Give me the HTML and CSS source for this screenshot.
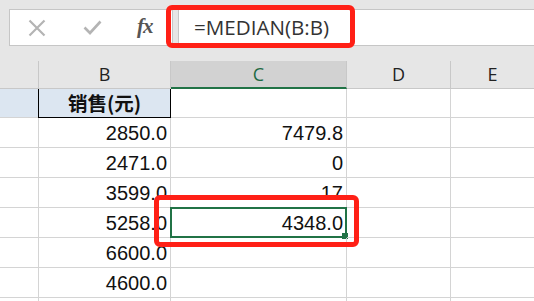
FILE: index.html
```html
<!DOCTYPE html>
<html>
<head>
<meta charset="utf-8">
<link rel="stylesheet" href="styles.css">
</head>
<body>
<div class="page">
  <div class="toolbar">
    <div class="fbox">
      <span class="ico"><svg width="18" height="18" viewBox="0 0 18 18"><path d="M1.5 1.5 L16.5 16.5 M16.5 1.5 L1.5 16.5" stroke="#b4b4b4" stroke-width="2.2" fill="none"/></svg></span>
      <span class="ico"><svg width="19" height="15" viewBox="0 0 19 15"><path d="M1.5 7.5 L7 13 L17.5 1.5" stroke="#b4b4b4" stroke-width="2.6" fill="none"/></svg></span>
      <span class="fx">fx</span>
    </div>
    <div class="finput">=MEDIAN(B:B)</div>
  </div>
  <div class="grid">
    <div class="hd">&nbsp;</div>
    <div class="hd">B</div>
    <div class="hd sel">C</div>
    <div class="hd">D</div>
    <div class="hd last">E</div>

    <div class="c blue"></div>
    <div class="c blue title">销售(元)</div>
    <div class="c"></div>
    <div class="c"></div>
    <div class="c last"></div>

    <div class="c"></div><div class="c num">2850.0</div><div class="c num">7479.8</div><div class="c"></div><div class="c last"></div>
    <div class="c"></div><div class="c num">2471.0</div><div class="c num">0</div><div class="c"></div><div class="c last"></div>
    <div class="c"></div><div class="c num">3599.0</div><div class="c num">17</div><div class="c"></div><div class="c last"></div>
    <div class="c"></div><div class="c num">5258.0</div><div class="c num active">4348.0<span class="handle"></span></div><div class="c"></div><div class="c last"></div>
    <div class="c"></div><div class="c num">6600.0</div><div class="c num"></div><div class="c"></div><div class="c last"></div>
    <div class="c"></div><div class="c num">4600.0</div><div class="c num"></div><div class="c"></div><div class="c last"></div>
    <div class="c"></div><div class="c num"></div><div class="c num"></div><div class="c"></div><div class="c last"></div>
  </div>
  <div class="mark mark-formula"></div>
  <div class="mark mark-cell"></div>
</div>
</body>
</html>
```

FILE: styles.css
```css
* { box-sizing: border-box; }
html, body { margin: 0; padding: 0; }
body {
  width: 534px;
  height: 301px;
  overflow: hidden;
  background: #ffffff;
  font-family: "Liberation Sans", Arial, "Noto Sans CJK SC", sans-serif;
}
.page { position: relative; width: 534px; height: 301px; overflow: hidden; }

.toolbar {
  background: #e6e6e6;
  height: 61px;
  padding: 9px 0 0 9px;
  display: flex;
  align-items: flex-start;
}
.fbox {
  width: 164px;
  height: 37px;
  background: #fff;
  border: 1px solid #c6c6c6;
  display: flex;
  align-items: center;
  padding-left: 18px;
}
.ico { display: flex; align-items: center; }
.ico:first-child { width: 55px; }
.ico:nth-child(2) { width: 54px; }
.fx {
  font-family: "Liberation Serif", "DejaVu Serif", serif;
  font-style: italic;
  font-weight: bold;
  font-size: 21px;
  color: #555;
  letter-spacing: -1px;
  margin-top: -3px;
}
.finput {
  margin-left: 5px;
  flex: 1;
  height: 37px;
  background: #fff;
  border: 1px solid #c6c6c6;
  border-right: none;
  font-family: "Open Sans", "Liberation Sans", sans-serif;
  font-size: 20.6px;
  color: #333;
  padding-left: 15px;
  line-height: 34px;
}

.grid {
  display: grid;
  grid-template-columns: 39px 132px 176px 104px 83px;
  grid-auto-rows: 30px;
  grid-template-rows: 28px 29px;
}
.hd {
  background: #e6e6e6;
  border-right: 1px solid #c8c8c8;
  border-bottom: 1px solid #c8c8c8;
  text-align: center;
  font-family: "Open Sans", "Liberation Sans", sans-serif;
  font-size: 18px;
  line-height: 26px;
  color: #222;
}
.hd.sel {
  background: #d2d2d2;
  color: #1d6a44;
  border-bottom: 2px solid #217346;
}
.last { border-right: none !important; }
.c {
  border-right: 1px solid #d4d4d4;
  border-bottom: 1px solid #d4d4d4;
  position: relative;
}
.blue { background: #dce6f1; }
.title {
  border: 1px solid #000;
  border-top: none;
  margin-left: -1px;
  text-align: center;
  font-family: "Noto Sans CJK SC", sans-serif;
  font-weight: bold;
  font-size: 19.5px;
  line-height: 27px;
  color: #111;
}
.num {
  text-align: right;
  padding-right: 3px;
  font-size: 20px;
  line-height: 31px;
  color: #111;
}
.active::before {
  content: "";
  position: absolute;
  left: -1px; top: -1px; right: -1px; bottom: -1px;
  border: 2px solid #217346;
}
.handle {
  position: absolute;
  right: -3px;
  bottom: -3px;
  width: 7px;
  height: 7px;
  background: #217346;
  border: 1px solid #fff;
  border-top: none;
  border-left: none;
}

.mark {
  position: absolute;
  border: 5px solid #ff2016;
  border-radius: 6px;
}
.mark-formula { left: 166px; top: 5px; width: 189px; height: 43px; }
.mark-cell { left: 154px; top: 195px; width: 205px; height: 52px; }
```
